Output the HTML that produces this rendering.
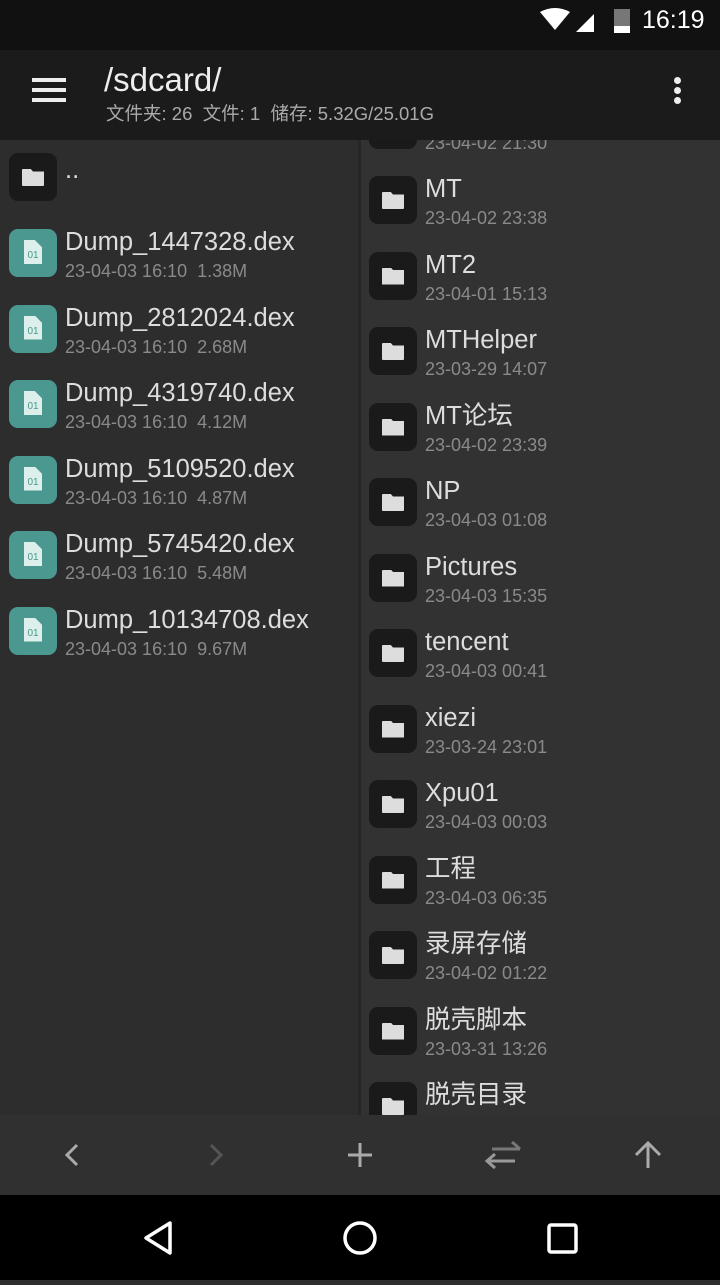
<!DOCTYPE html>
<html><head><meta charset="utf-8"><style>
*{margin:0;padding:0;box-sizing:border-box}
body{width:720px;height:1280px;overflow:hidden;background:#2e2e2e;font-family:"Liberation Sans","Noto Sans CJK SC",sans-serif;position:relative}
.abs{position:absolute}
#status{left:0;top:0;width:720px;height:50px;background:#111}
#bar{left:0;top:50px;width:720px;height:90px;background:#1b1b1b}
#left{left:0;top:140px;width:358px;height:975px;background:#2d2d2d}
#div{left:358px;top:140px;width:3px;height:975px;background:#262626}
#right{left:361px;top:140px;width:359px;height:975px;background:#323232;overflow:hidden}
#bottom{left:0;top:1115px;width:720px;height:80px;background:#303030}
#nav{left:0;top:1195px;width:720px;height:85px;background:#000}
.fi{position:absolute;width:48px;height:48px;border-radius:9px;background:#1a1a1a}
.fi:after{content:"";position:absolute;left:13px;top:16px;width:22px;height:17px;background:#ddd;border-radius:1px;clip-path:polygon(0 0,40% 0,50% 15%,100% 15%,100% 100%,0 100%)}
.dx{position:absolute;width:48px;height:48px;border-radius:9px;background:#4a9890}
.dx:after{content:"01";position:absolute;left:15px;top:11px;width:18px;height:24px;background:#dcefeb;color:#4a9890;font-size:10px;line-height:32px;text-align:center;clip-path:polygon(0 0,60% 0,100% 30%,100% 100%,0 100%)}
.n{position:absolute;color:#ddd;font-size:25.5px;line-height:30px;white-space:nowrap}
.d{position:absolute;color:#8a8a8a;font-size:18px;line-height:22px;white-space:nowrap}
</style></head><body>
<div id="status" class="abs">
<svg class="abs" style="left:540px;top:8px" width="90" height="26"><path d="M0 4 Q15 -4 30 4 L15 22Z" fill="#fff"/><path d="M36 24 L54 6 L54 24Z" fill="#fff"/><rect x="74" y="1" width="16" height="24" fill="#777"/><rect x="74" y="18" width="16" height="7" fill="#fff"/></svg>
<div class="abs" style="left:642px;top:6px;color:#fff;font-size:25px">16:19</div>
</div>
<div id="bar" class="abs">
<div class="abs" style="left:32px;top:28px;width:34px;height:4px;background:#eee;box-shadow:0 10px 0 #eee,0 20px 0 #eee"></div>
<div class="abs" style="left:104px;top:10px;color:#eee;font-size:33px;line-height:40px">/sdcard/</div>
<div class="abs" style="left:106px;top:52px;color:#aaa;font-size:18.5px;line-height:24px">文件夹: 26&nbsp; 文件: 1&nbsp; 储存: 5.32G/25.01G</div>
<div class="abs" style="left:674px;top:27px;width:7px;height:7px;border-radius:50%;background:#eee;box-shadow:0 10px 0 #eee,0 20px 0 #eee"></div>
</div>
<div id="left" class="abs">
<div class="fi" style="left:9px;top:13px"></div><div class="n" style="left:65px;top:15px">..</div>
</div>
<div id="div" class="abs"></div>
<div id="right" class="abs"></div>
<div id="bottom" class="abs">
<svg width="720" height="80"><g fill="none" stroke-width="3"><path d="M77 30 L67 40 L77 50" stroke="#aaa"/><path d="M211 30 L221 40 L211 50" stroke="#555"/><path d="M348 40 H372 M360 28 V52" stroke="#aaa"/><path d="M520 34 H492 M512 27 L520 34" stroke="#777"/><path d="M487 46 H515 M495 39 L487 46 L495 53" stroke="#999"/><path d="M648 53 V28 M636 40 L648 28 L660 40" stroke="#aaa"/></g></svg>
</div>
<div id="nav" class="abs">
<svg width="720" height="85"><g fill="none" stroke="#fff" stroke-width="3.5"><path d="M170 28 L146 43 L170 58Z" stroke-linejoin="round"/><circle cx="360" cy="43" r="15"/><rect x="549" y="30" width="27" height="27" rx="2"/></g></svg>
</div>
<script>
var L=[["Dump_1447328.dex","1.38M"],["Dump_2812024.dex","2.68M"],["Dump_4319740.dex","4.12M"],["Dump_5109520.dex","4.87M"],["Dump_5745420.dex","5.48M"],["Dump_10134708.dex","9.67M"]];
var h="";L.forEach(function(r,i){var y=89+i*75.5;h+='<div class="dx" style="left:9px;top:'+y+'px"></div><div class="n" style="left:65px;top:'+(y-2)+'px">'+r[0]+'</div><div class="d" style="left:65px;top:'+(y+31)+'px">23-04-03 16:10&nbsp; '+r[1]+'</div>';});
document.getElementById("left").innerHTML+=h;
var R=[["","23-04-02 21:30"],["MT","23-04-02 23:38"],["MT2","23-04-01 15:13"],["MTHelper","23-03-29 14:07"],["MT论坛","23-04-02 23:39"],["NP","23-04-03 01:08"],["Pictures","23-04-03 15:35"],["tencent","23-04-03 00:41"],["xiezi","23-03-24 23:01"],["Xpu01","23-04-03 00:03"],["工程","23-04-03 06:35"],["录屏存储","23-04-02 01:22"],["脱壳脚本","23-03-31 13:26"],["脱壳目录",""]];
h="";R.forEach(function(r,i){var y=-39.5+i*75.5;h+='<div class="fi" style="left:8px;top:'+y+'px"></div><div class="n" style="left:64px;top:'+(y-2)+'px">'+r[0]+'</div><div class="d" style="left:64px;top:'+(y+31)+'px">'+r[1]+'</div>';});
document.getElementById("right").innerHTML=h;
</script>
</body></html>
